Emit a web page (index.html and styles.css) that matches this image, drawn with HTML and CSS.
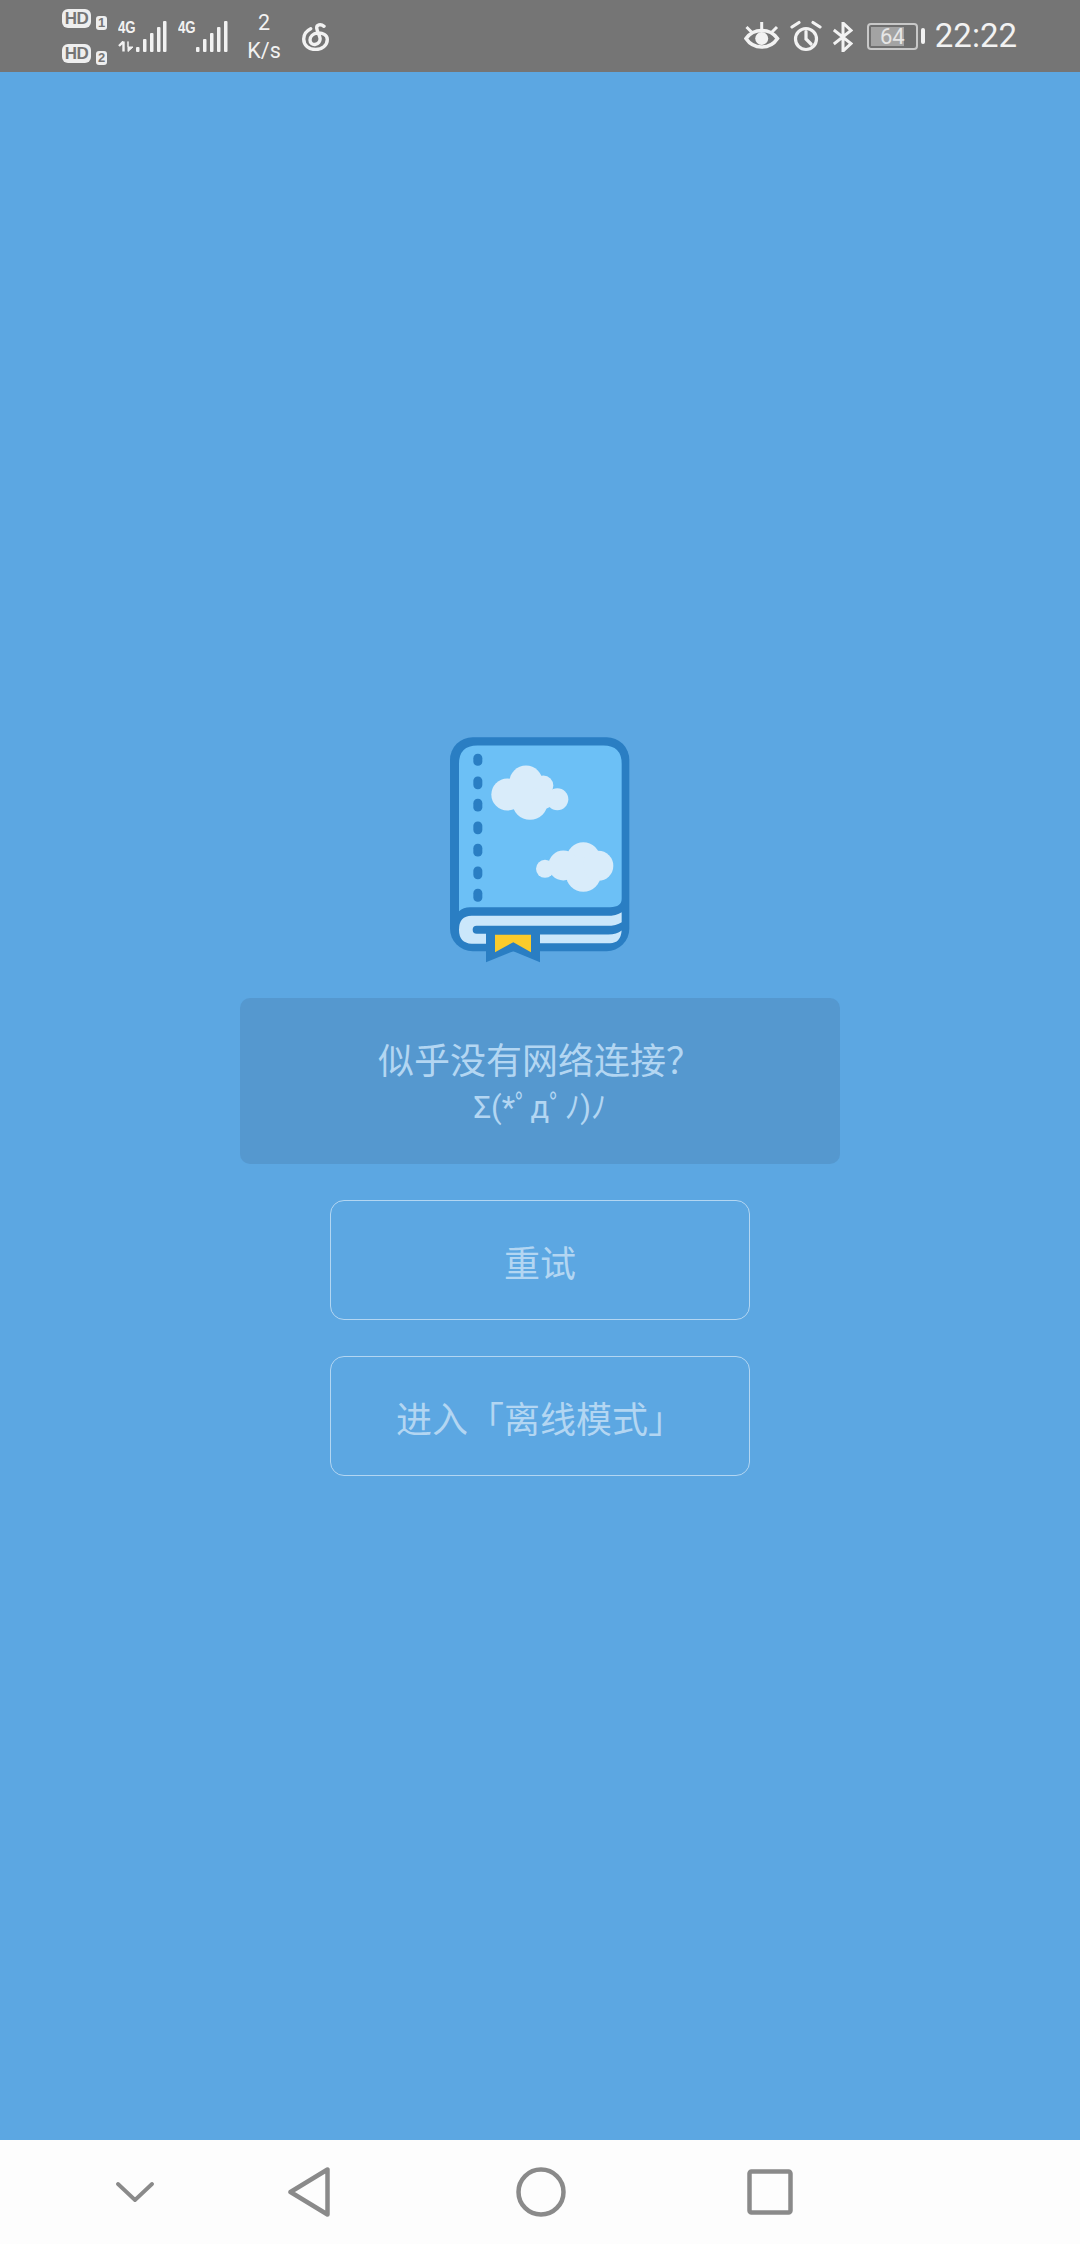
FILE: index.html
```html
<!DOCTYPE html>
<html lang="zh-CN">
<head>
  <meta charset="UTF-8" />
  <meta name="viewport" content="width=device-width, initial-scale=1.0" />
  <title>似乎没有网络连接</title>
  <link rel="stylesheet" href="styles.css">
</head>
<body>
  <div class="status-bar">
    <div class="status-left">
      <div class="sims">
        <div class="sim"><span class="hd">HD</span><span class="sim-num">1</span></div>
        <div class="sim"><span class="hd">HD</span><span class="sim-num">2</span></div>
      </div>
      <div class="net net-first">
        <div class="net-label">
          <span class="net-text">4G</span>
          <svg class="arrows" width="17" height="11" viewBox="0 0 17 11">
            <path d="M5.500 0.500V10.500M5.500 0.500L1 5" stroke="#f2f2f2" stroke-width="2.400" fill="none"/>
            <path d="M10 0.500V10.500L15 6H10Z" fill="#f2f2f2" stroke="#f2f2f2"/>
          </svg>
        </div>
        <svg class="signal" width="31" height="31" viewBox="0 0 31 31">
          <rect x="0" y="26" width="3.500" height="5" rx="1"/>
          <rect x="7" y="18" width="3.500" height="13" rx="1"/>
          <rect x="14" y="12" width="3.500" height="19" rx="1"/>
          <rect x="21" y="6" width="3.500" height="25" rx="1"/>
          <rect x="27" y="0" width="3.500" height="31" rx="1"/>
        </svg>
      </div>
      <div class="net net-second">
        <div class="net-label">
          <span class="net-text">4G</span>
        </div>
        <svg class="signal" width="33" height="31" viewBox="0 0 33 31">
          <rect x="0" y="26" width="3.500" height="5" rx="1"/>
          <rect x="7" y="18" width="3.500" height="13" rx="1"/>
          <rect x="14" y="12" width="3.500" height="19" rx="1"/>
          <rect x="21" y="6" width="3.500" height="25" rx="1"/>
          <rect x="28" y="0" width="3.500" height="31" rx="1"/>
        </svg>
      </div>
      <div class="speed"><span>2</span><span>K/s</span></div>
      <svg class="netease" width="27" height="28" viewBox="0 0 27 28" fill="none" stroke="#f2f2f2" stroke-width="3.400" stroke-linecap="round">
        <path d="M8.700 5.700C4 8 1.700 12 1.700 16C1.700 22.500 7 26.500 13.500 26.500C20 26.500 25.300 22.500 25.300 16.500C25.300 12 20.500 9.500 15.500 10C11 10.500 8 13.500 8 17C8 20 10.500 21.800 13 21.500C16.500 21 18.500 18 18 15C17.500 12 15 8 14.700 5C14.500 2 18.500 0.500 22 3.300"/>
      </svg>
    </div>
    <div class="status-right">
      <svg class="eye" width="36" height="30" viewBox="0 0 36 30" fill="none" stroke="#f2f2f2" stroke-width="3.600">
        <path d="M2 17.500C6 12 11 9.500 17.700 9.500C24.500 9.500 29.500 12 33.500 17.500C29.500 23.500 24.500 26 17.700 26C11 26 6 23.500 2 17.500Z"/>
        <circle cx="17.700" cy="17.500" r="6.500" fill="#f2f2f2" stroke="none"/>
        <path d="M17.700 1V8M2.500 6L7.500 11M33 6L28 11" stroke-width="3"/>
      </svg>
      <svg class="alarm" width="32" height="32" viewBox="0 0 32 32" fill="none" stroke="#f2f2f2" stroke-width="3.200">
        <circle cx="16" cy="19" r="10.500"/>
        <path d="M16 11.500V19L21 24M2 7L9 2.500M30 7L23 2.500" stroke-linecap="round"/>
      </svg>
      <svg class="bluetooth" width="20" height="30" viewBox="0 0 20 30" fill="none" stroke="#f2f2f2" stroke-width="3">
        <path d="M0.800 8L18 21.500L10 29V1L18 8.500L0.800 22"/>
      </svg>
      <div class="battery">
        <div class="battery-body">
          <div class="battery-level"></div>
          <span class="battery-text">64</span>
        </div>
        <div class="battery-nub"></div>
      </div>
      <span class="clock">22:22</span>
    </div>
  </div>

  <div class="main">
    <svg class="book" width="180" height="227" viewBox="60 50 540 680">
      <rect x="60" y="50" width="538" height="642" rx="68" fill="#2a7ec3"/>
      <path d="M87 130Q87 75 142 75H520Q575 75 575 130V535Q575 560 540 560H120Q100 560 87 572Z" fill="#6cc0f6"/>
      <path d="M575 575Q560 586 530 586H125Q87 586 87 628Q87 668 125 670H175V640H140Q128 640 128 628Q128 616 140 616H530Q560 616 575 605Z" fill="#cbe7fb"/>
      <path d="M330 642H535Q560 642 575 630Q572 668 540 668H330Z" fill="#cbe7fb"/>
      <g fill="#2a7ec3">
        <rect x="130" y="100" width="27" height="36" rx="13"/>
        <rect x="130" y="168" width="27" height="38" rx="13"/>
        <rect x="130" y="235" width="27" height="38" rx="13"/>
        <rect x="130" y="303" width="27" height="38" rx="13"/>
        <rect x="130" y="370" width="27" height="38" rx="13"/>
        <rect x="130" y="438" width="27" height="38" rx="13"/>
        <rect x="130" y="505" width="27" height="39" rx="13"/>
      </g>
      <path d="M168 622H330V725L250 692L168 725Z" fill="#2a7ec3"/>
      <path d="M195 643H303V695L250 665L195 695Z" fill="#fbcb2b"/>
      <g fill="#d9ecfa">
        <circle cx="288" cy="185" r="50"/>
        <circle cx="232" cy="222" r="48"/>
        <circle cx="300" cy="245" r="53"/>
        <circle cx="340" cy="195" r="30"/>
        <circle cx="382" cy="236" r="33"/>
        <circle cx="340" cy="230" r="35"/>
        <circle cx="460" cy="415" r="50"/>
        <circle cx="400" cy="435" r="45"/>
        <circle cx="345" cy="445" r="27"/>
        <circle cx="460" cy="462" r="52"/>
        <circle cx="505" cy="436" r="45"/>
      </g>
    </svg>

    <div class="message">
      <div class="message-title">似乎没有网络连接？</div>
      <div class="message-face">Σ(*ﾟдﾟﾉ)ﾉ</div>
    </div>

    <button class="btn">重试</button>
    <button class="btn">进入「离线模式」</button>
  </div>

  <div class="nav-bar">
    <svg class="nav-down" width="38" height="20" viewBox="0 0 38 20" fill="none" stroke="#8a8a8a" stroke-width="3.800" stroke-linecap="round" stroke-linejoin="round">
      <path d="M2 2L19 18L36 2"/>
    </svg>
    <svg class="nav-back" width="42" height="50" viewBox="0 0 42 50" fill="none" stroke="#8a8a8a" stroke-width="4.500" stroke-linejoin="round">
      <path d="M39.500 2.500V47.500L2.500 25Z"/>
    </svg>
    <svg class="nav-home" width="50" height="50" viewBox="0 0 50 50" fill="none" stroke="#8a8a8a" stroke-width="4.500">
      <circle cx="25" cy="25" r="22.500"/>
    </svg>
    <svg class="nav-recent" width="46" height="46" viewBox="0 0 46 46" fill="none" stroke="#8a8a8a" stroke-width="4.500" stroke-linejoin="round">
      <rect x="2.500" y="2.500" width="41" height="41" rx="2"/>
    </svg>
  </div>
</body>
</html>
```

FILE: styles.css
```css
* {
  box-sizing: border-box;
}
html, body {
  height: 100%;
}
body {
  font-family: "Noto Sans CJK SC", "Noto Sans", sans-serif;
  background: #5ca7e2;
  margin: 0;
  display: flex;
  flex-direction: column;
}

/* status bar */
.status-bar {
  height: 72px;
  background: #757575;
  color: #f2f2f2;
  display: flex;
  justify-content: space-between;
  align-items: center;
  padding: 0 63px 0 62px;
  font-family: Roboto, sans-serif;
}
.status-left, .status-right {
  display: flex;
  align-items: center;
}
.sims {
  display: flex;
  flex-direction: column;
  gap: 17px;
}
.sim {
  display: flex;
  align-items: flex-end;
  gap: 5px;
  height: 18px;
}
.hd {
  width: 29px;
  height: 19px;
  background: #eeeeee;
  color: #757575;
  border-radius: 6px;
  font-family: "Liberation Sans", sans-serif;
  font-size: 17px;
  font-weight: bold;
  line-height: 19px;
  text-align: center;
  letter-spacing: -0.5px;
}
.sim-num {
  width: 11px;
  height: 14px;
  margin-bottom: -2px;
  background: #eeeeee;
  color: #757575;
  border-radius: 3px;
  font-family: "Liberation Sans", sans-serif;
  font-size: 13px;
  font-weight: bold;
  line-height: 14px;
  text-align: center;
}
.net {
  display: flex;
  align-items: flex-end;
  height: 31px;
  margin-left: 11px;
}
.net-label {
  display: flex;
  flex-direction: column;
  justify-content: space-between;
  height: 31px;
  width: 18px;
  padding-top: 1px;
}
.net-text {
  display: block;
  width: 23px;
  font-family: "Liberation Sans", sans-serif;
  font-size: 17px;
  font-weight: bold;
  line-height: 12px;
  transform: scaleX(0.78);
  transform-origin: left;
}
.signal {
  fill: #f2f2f2;
}
.speed {
  display: flex;
  flex-direction: column;
  align-items: center;
  width: 34px;
  margin: 1px 0 0 18px;
  font-size: 21.500px;
  line-height: 28px;
}
.netease {
  margin: 1px 0 0 21px;
}
.eye {
  margin-right: 10px;
}
.alarm {
  margin-right: 11px;
}
.bluetooth {
  margin: 2px 14px 0 0;
}
.battery {
  display: flex;
  align-items: center;
  gap: 3px;
  margin-right: 10px;
}
.battery-body {
  position: relative;
  width: 51px;
  height: 27px;
  background: #6e6e6e;
  border: 2px solid #c8c8c8;
  border-radius: 4px;
  color: #e6e6e6;
  text-align: center;
  font-size: 22px;
  line-height: 23px;
}
.battery-level {
  position: absolute;
  left: 2px;
  top: 2px;
  bottom: 2px;
  width: 33px;
  background: #a3a3a3;
}
.battery-text {
  position: relative;
}
.battery-nub {
  width: 4px;
  height: 16px;
  background: #f2f2f2;
  border-radius: 2px;
}
.clock {
  font-size: 33px;
  line-height: 40px;
}

/* main */
.main {
  flex: 1;
  display: flex;
  flex-direction: column;
  align-items: center;
  padding-top: 665px;
}
.book {
  display: block;
}
.message {
  width: 600px;
  height: 166px;
  margin-top: 34px;
  padding-top: 37px;
  background: #5598cf;
  border-radius: 10px;
  color: #b3d6f2;
  text-align: center;
}
.message-title {
  font-size: 36px;
  line-height: 46px;
}
.message-face {
  margin-top: 6px;
  font-family: Roboto, "Noto Sans CJK SC", sans-serif;
  font-size: 31px;
  line-height: 42px;
}
.btn {
  display: block;
  width: 420px;
  height: 120px;
  margin-top: 36px;
  padding: 1px 0 0;
  background: transparent;
  border: 1.500px solid #b3d6f2;
  border-radius: 14px;
  color: #b3d6f2;
  font-family: inherit;
  font-size: 36px;
}

/* nav bar */
.nav-bar {
  height: 104px;
  background: #fdfdfd;
  display: flex;
  align-items: center;
  padding-left: 116px;
}
.nav-down {
  margin-right: 134px;
}
.nav-back {
  margin-right: 186px;
}
.nav-home {
  margin-right: 181px;
}
```
